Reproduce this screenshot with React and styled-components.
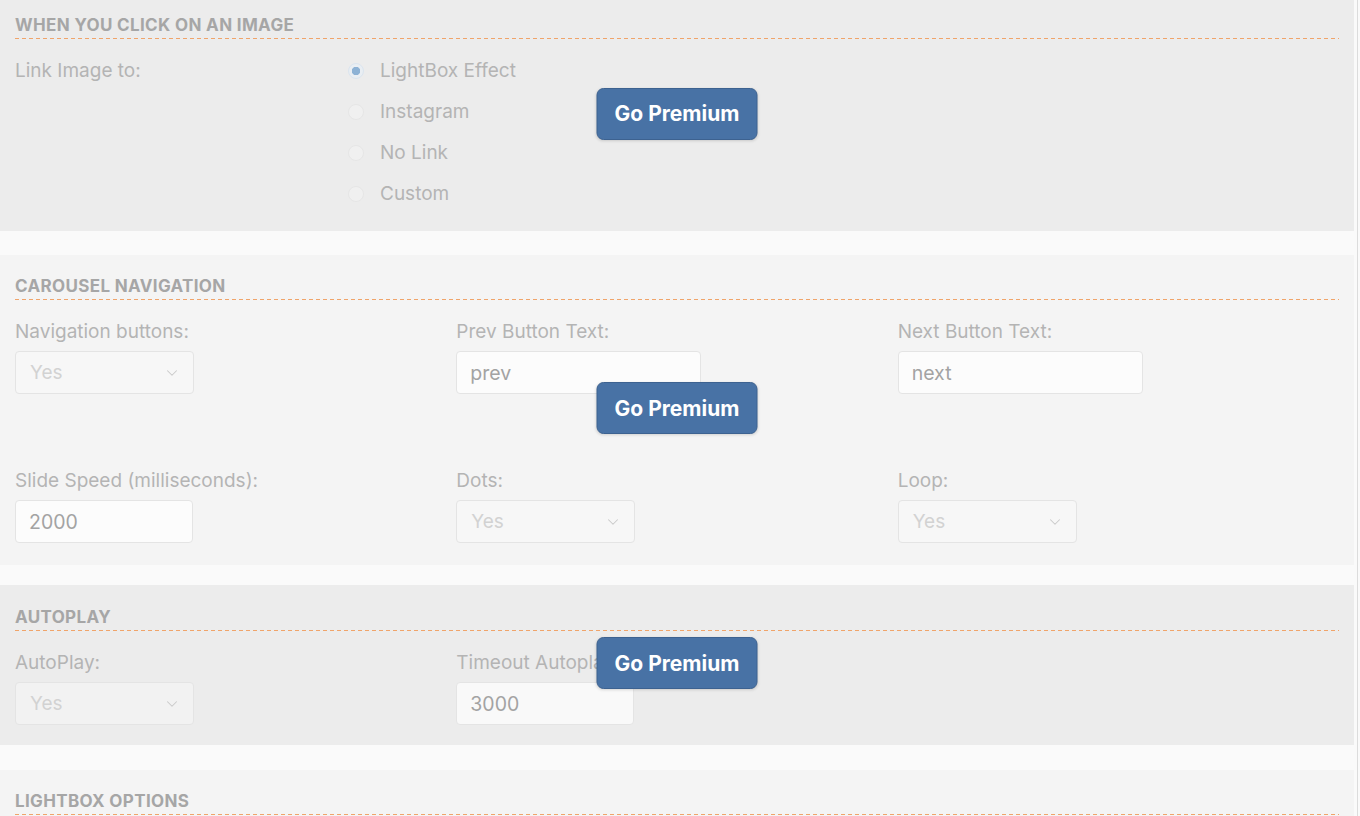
import React from "react";
import styled, { createGlobalStyle } from "styled-components";
import { ChevronDown } from "lucide-react";

const GlobalStyle = createGlobalStyle`
  body {
    margin: 0;
    background: #fafafa;
    font-family: Inter, Roboto, "Liberation Sans", Arial, sans-serif;
    overflow: hidden;
  }
`;

export default function App() {
  return (
    <>
      <GlobalStyle />
      <Page>
        <Section $tone="dark" $pt={14} $pb={25}>
          <Heading>When you click on an image</Heading>
          <LinkRow>
            <Label>Link Image to:</Label>
            <RadioList>
              {["LightBox Effect", "Instagram", "No Link", "Custom"].map((opt, i) => (
                <RadioOption key={opt}>
                  <RadioDot $checked={i === 0} />
                  {opt}
                </RadioOption>
              ))}
            </RadioList>
          </LinkRow>
          <PremiumButton>Go Premium</PremiumButton>
        </Section>

        <Section $tone="light" $mt={24} $pt={20} $pb={22}>
          <Heading>Carousel Navigation</Heading>
          <FieldGrid>
            <Field>
              <Label>Navigation buttons:</Label>
              <Select value="Yes" />
            </Field>
            <Field>
              <Label>Prev Button Text:</Label>
              <TextInput $wide>prev</TextInput>
            </Field>
            <Field>
              <Label>Next Button Text:</Label>
              <TextInput $wide>next</TextInput>
            </Field>
            <Field>
              <Label>Slide Speed (milliseconds):</Label>
              <TextInput>2000</TextInput>
            </Field>
            <Field>
              <Label>Dots:</Label>
              <Select value="Yes" />
            </Field>
            <Field>
              <Label>Loop:</Label>
              <Select value="Yes" />
            </Field>
          </FieldGrid>
          <PremiumButton>Go Premium</PremiumButton>
        </Section>

        <Section $tone="dark" $mt={20} $pt={21} $pb={20}>
          <Heading>Autoplay</Heading>
          <FieldGrid>
            <Field>
              <Label>AutoPlay:</Label>
              <Select value="Yes" />
            </Field>
            <Field>
              <Label>Timeout Autoplay:</Label>
              <TextInput>3000</TextInput>
            </Field>
          </FieldGrid>
          <PremiumButton>Go Premium</PremiumButton>
        </Section>

        <Section $tone="light" $mt={25} $pt={20} $pb={40}>
          <Heading>Lightbox Options</Heading>
        </Section>
      </Page>
    </>
  );
}

const Select = ({ value }) => (
  <SelectBox>
    <span>{value}</span>
    <ChevronDown size={18} strokeWidth={1.4} color="#c9c9c9" />
  </SelectBox>
);

const Page = styled.div`
  width: 1354px;
  padding-right: 3px;
  border-right: 1px solid #dcdcdc;
  min-height: 816px;
  display: flex;
  flex-direction: column;
`;

const Section = styled.section`
  position: relative;
  margin-top: ${({ $mt }) => $mt || 0}px;
  padding: ${({ $pt }) => $pt}px 15px ${({ $pb }) => $pb}px;
  background: ${({ $tone }) => ($tone === "dark" ? "#ececec" : "#f4f4f4")};
`;

const Heading = styled.h3`
  position: relative;
  margin: 0 0 19px;
  padding-bottom: 3px;
  font-size: 17px;
  letter-spacing: 0.35px;
  line-height: 22px;
  font-weight: 700;
  text-transform: uppercase;
  color: #a6a6a6;

  &::after {
    content: "";
    position: absolute;
    left: 0;
    right: 0;
    bottom: 0;
    height: 1px;
    background: repeating-linear-gradient(
      to right,
      #f0a46a 0 4px,
      transparent 4px 7px
    );
  }
`;

const LinkRow = styled.div`
  display: grid;
  grid-template-columns: 25% 1fr;
`;

const Label = styled.div`
  font-size: 19px;
  line-height: 24px;
  padding-top: 1px;
  height: 23px;
  color: #b4b4b4;
  margin-bottom: 8px;
`;

const RadioList = styled.div`
  display: flex;
  flex-direction: column;
  gap: 17px;
  padding: 1px 0 0 2px;
`;

const RadioOption = styled.div`
  display: flex;
  align-items: center;
  gap: 16px;
  font-size: 19px;
  line-height: 24px;
  color: #b4b4b4;
`;

const RadioDot = styled.span`
  width: 16px;
  height: 16px;
  border-radius: 50%;
  box-sizing: border-box;
  border: 1px solid ${({ $checked }) => ($checked ? "#dbe5ef" : "#e6e6e6")};
  background: ${({ $checked }) =>
    $checked ? "radial-gradient(circle, #8db2d5 0 4px, #e9eef3 4.5px)" : "#f0f0f0"};
`;

const FieldGrid = styled.div`
  display: grid;
  grid-template-columns: repeat(3, 1fr);
  row-gap: 74px;
`;

const Field = styled.div`
  display: flex;
  flex-direction: column;
  align-items: flex-start;
`;

const SelectBox = styled.div`
  box-sizing: border-box;
  width: 179px;
  height: 43px;
  padding: 0 12px 0 14px;
  display: flex;
  align-items: center;
  justify-content: space-between;
  border: 1px solid #e4e4e4;
  border-radius: 4px;
  background: rgba(255, 255, 255, 0.3);
  font-size: 19px;
  color: #d2d2d2;
`;

const TextInput = styled.div`
  box-sizing: border-box;
  width: ${({ $wide }) => ($wide ? 245 : 178)}px;
  height: 43px;
  padding: 0 13px;
  display: flex;
  align-items: center;
  border: 1px solid #e4e4e4;
  border-radius: 4px;
  background: rgba(255, 255, 255, 0.7);
  font-size: 19.5px;
  color: #a3a3a3;
`;

const PremiumButton = styled.button`
  position: absolute;
  top: calc(50% - 2px);
  left: 50%;
  transform: translate(-50%, -50%);
  width: 161px;
  height: 52px;
  border: 1px solid #3d6290;
  border-radius: 7px;
  background: #4872a5;
  box-shadow: 0 1px 3px rgba(0, 0, 0, 0.15);
  color: #fff;
  font-family: Inter, Roboto, "Liberation Sans", Arial, sans-serif;
  font-size: 21px;
  font-weight: 700;
  padding: 0;
  cursor: pointer;
`;
